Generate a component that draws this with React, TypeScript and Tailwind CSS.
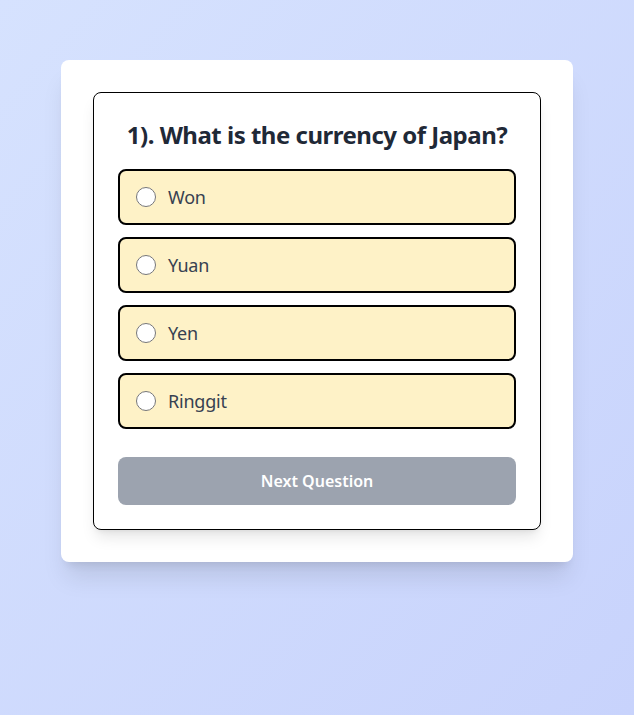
import React, { useState } from "react";

const options = ["Won", "Yuan", "Yen", "Ringgit"];

const App = () => {
  const [picked, setPicked] = useState<string | null>(null);

  return (
    <div
      className="min-h-screen bg-gradient-to-br from-[#d6e2fe] to-[#c8d3fc] pt-[60px]"
      style={{ fontFamily: '"Noto Sans", "Open Sans", sans-serif' }}
    >
      <div className="mx-auto w-[512px] rounded-lg bg-white p-8 shadow-xl">
        <div className="rounded-lg border border-black bg-white p-6 shadow-lg">
          <h2 className="mb-4 text-center text-2xl leading-9 font-bold tracking-[-0.5px] text-[#1f2937]">
            1). What is the currency of Japan?
          </h2>

          <div className="flex flex-col gap-3">
            {options.map((o) => (
              <label
                key={o}
                className="flex cursor-pointer items-center gap-3 rounded-lg border-2 border-black bg-[#fef2c7] px-4 py-3"
              >
                <input
                  type="radio"
                  name="answer"
                  checked={picked === o}
                  onChange={() => setPicked(o)}
                  className="h-5 w-5"
                />
                <span className="text-lg leading-7 tracking-[-0.2px] text-[#374151]">
                  {o}
                </span>
              </label>
            ))}
          </div>

          <button
            disabled={!picked}
            className="mt-7 h-12 w-full rounded-lg bg-[#9ca3af] font-semibold text-white"
          >
            Next Question
          </button>
        </div>
      </div>
    </div>
  );
};

export default App;
